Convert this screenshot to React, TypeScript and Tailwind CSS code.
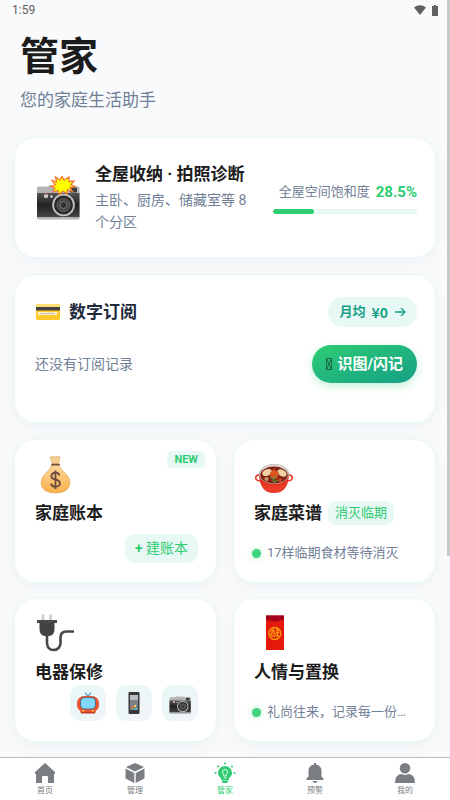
import type { ReactNode } from "react";

const CARD = "rounded-[21px] border border-[#e8f8f5] bg-white shadow-[0_4px_16px_rgba(30,41,59,0.04)]";

function Camera({ flash = false, className }: { flash?: boolean; className: string }) {
  return (
    <svg viewBox="0 0 44 44" className={className} aria-hidden="true">
      <defs>
        <linearGradient id="camBody" x1="0" y1="0" x2="0" y2="1">
          <stop offset="0" stopColor="#555" />
          <stop offset="0.5" stopColor="#222" />
          <stop offset="1" stopColor="#454545" />
        </linearGradient>
      </defs>
      <path d="M1 12q0-1.500 1.500-1.500H12l2-1.500h14l2 1.500h12q1.500 0 1.500 1.500v29q0 2-2 2h-38q-2.500 0-2.500-2z" fill="#b3b3b3" />
      <path d="M1 17h42.500v24H1z" fill="url(#camBody)" />
      <path d="M1 41h42.500v1q0 1.500-2 1.500H3q-2 0-2-1.500z" fill="#b5b5b5" />
      <rect x="34" y="11.500" width="7" height="5" rx="1" fill="#3b3b3b" />
      <circle cx="10" cy="20" r="2.200" fill="#c9c9c9" />
      <circle cx="10" cy="18" r="1" fill="#d55346" />
      <circle cx="15.500" cy="20.500" r="1.200" fill="#ddd" />
      <circle cx="27.500" cy="29" r="11.300" fill="#c4c4c4" />
      <circle cx="27.500" cy="29" r="9.500" fill="#292929" />
      <circle cx="27.500" cy="29" r="6.500" fill="#474747" stroke="#777" strokeWidth="0.700" />
      <circle cx="27.500" cy="29" r="3.500" fill="#303030" stroke="#888" strokeWidth="0.800" />
      {flash && (
        <path
          d="m15.500 4 5 2-1-5 4.500 3 2-4 2 4 5-3v4.500l5-.5-3 3.500 4 2-5 1 2.500 4-5-2-.5 4.500-4-3-3.500 3.500-1.500-4-5 1.500 2-4-3.500-1.500 4-2z"
          fill="#ff0"
          stroke="#f47b37"
          strokeWidth="1.300"
        />
      )}
    </svg>
  );
}

function CreditCard() {
  return (
    <svg viewBox="0 0 26 18" className="h-[18px] w-[26px]" aria-hidden="true">
      <rect x="1" y="1" width="24" height="16" rx="1.500" fill="#fdc92f" />
      <path d="M1 2.500Q1 1 2.500 1h21Q25 1 25 2.500V4H1z" fill="#ffdf75" />
      <path d="M1 4h24v3.500H1z" fill="#424242" />
      <path d="M3 9h19v3H3z" fill="#fff2ce" />
      <path d="m5 11 2-1 1 1 2-1 1 1 3-1 2 1 2-1 2 1" stroke="#9b9686" strokeWidth="0.600" fill="none" />
    </svg>
  );
}

function MoneyBag() {
  return (
    <svg viewBox="0 0 40 40" className="size-10" aria-hidden="true">
      <defs>
        <linearGradient id="bag" x1="0" y1="0" x2="0" y2="1">
          <stop offset="0" stopColor="#ffd79a" />
          <stop offset="1" stopColor="#f9b24e" />
        </linearGradient>
      </defs>
      <path d="M15 2q2-1 4 0 3-1 6 0l-1.500 7h-6z" fill="#f7cd8d" stroke="#d9ae74" strokeWidth="0.700" />
      <path d="M17 10h7q2 5 7 9 4 4 4 9-1 10-14.500 10T6 28q0-5 4-9 5-4 7-9z" fill="url(#bag)" stroke="#e0a04b" strokeWidth="0.600" />
      <path d="M17 9.700h7" stroke="#76513f" strokeWidth="1.800" strokeLinecap="round" />
      <path d="M24.500 20.500q-1-3-4-3t-4 3 4 4q4.500 1 4.500 4.200-.5 3-4.500 3t-4.500-3.200M20.500 15.500v18.500" fill="none" stroke="#6d4c41" strokeWidth="1.800" />
    </svg>
  );
}

function HotPot() {
  return (
    <svg viewBox="0 0 40 40" className="size-10" aria-hidden="true">
      <path d="M6 20H4q-3 1-2 4 1 2 5 2M34 20h2q3 1 2 4-1 2-5 2" fill="none" stroke="#e5341f" strokeWidth="1.600" />
      <path d="M5 20q1 18 15 18t15-18z" fill="#e63420" />
      <path d="M8 29q12 5 24 0-2 8-12 8T8 29" fill="#f0452e" opacity=".6" />
      <ellipse cx="20" cy="19" rx="15" ry="10" fill="#b0aaa7" />
      <ellipse cx="20" cy="18" rx="13.800" ry="8.500" fill="#dfdad6" />
      <ellipse cx="20" cy="20" rx="13.700" ry="8.500" fill="#822315" />
      <ellipse cx="13" cy="17.500" rx="5" ry="3.200" fill="#efd2a0" transform="rotate(-24 13 17.500)" />
      <ellipse cx="28" cy="18" rx="5" ry="3.200" fill="#efd2a0" transform="rotate(28 28 18)" />
      <path d="m16 18 4-4 5 4-2 6-6-1z" fill="#df5423" />
      <circle cx="12.500" cy="24" r="2" fill="#cf9d66" />
      <circle cx="26" cy="25" r="1.800" fill="#d84923" />
      <path d="m16 22 4 2 2-3m-3 3 1 3 4-2" fill="none" stroke="#5f8c3c" strokeWidth="1.300" />
    </svg>
  );
}

function Plug() {
  return (
    <svg viewBox="0 0 40 40" className="size-10" aria-hidden="true">
      <path d="M8 7V0.500M15.500 7V0.500" stroke="#ccc" strokeWidth="2.600" />
      <path d="M2 6h20v3H2z" fill="#484848" />
      <path d="M4.500 9h15v6q0 6-5 7h-5q-5-1-5-7z" fill="#424242" />
      <path d="M12 21v8q.5 7 6.500 7t7-6.500V23.500q0-6 6-6H39" fill="none" stroke="#484848" strokeWidth="2.600" />
    </svg>
  );
}

function RedEnvelope() {
  return (
    <svg viewBox="0 0 40 40" className="size-10" aria-hidden="true">
      <path d="M12 1.500h18V36H12z" fill="#e5180c" />
      <path d="M12 1.500h18V6q-5 0-6.500 1.500h-5Q17 6 12 6z" fill="#a4001c" />
      <circle cx="20.800" cy="19.500" r="6" fill="#e22a0b" stroke="#f99b09" strokeWidth="1.300" />
      <path d="M17 17h4m-2-2v3m-2 1h4v3h-4zm5-3h3m-3 2.500h3m-1.500-4v8M22 22h3" fill="none" stroke="#ffac13" strokeWidth="1" />
    </svg>
  );
}

function Television() {
  return (
    <svg viewBox="0 0 24 24" className="size-6" aria-hidden="true">
      <path d="m9 1.500 3 4 3-4" fill="none" stroke="#64a9bb" strokeWidth="1.400" />
      <path d="M4 19h16l-1 3.500H5z" fill="#c63b21" />
      <rect x="1" y="5" width="22" height="16" rx="7" fill="#ed5430" />
      <rect x="4" y="6" width="16" height="12.500" rx="4.500" fill="#576d78" />
      <rect x="5" y="7" width="14" height="10.500" rx="4" fill="#82d5fb" />
      <path d="M6 19.800h2m8 0h2" stroke="#ffc64b" strokeWidth="1.500" />
    </svg>
  );
}

function Phone() {
  return (
    <svg viewBox="0 0 24 24" className="size-6" aria-hidden="true">
      <rect x="6.500" y="1" width="11" height="22" rx="1" fill="#393939" />
      <path d="M8 4h8v15H8z" fill="#7b8285" />
      <path d="M8 4h8v5H8z" fill="#bcbfc0" />
      <path d="M9 15h2v2H9z" fill="#e8594a" />
      <path d="M12 14h2v2h-2z" fill="#fbc645" />
      <path d="M13 17h2v2h-2z" fill="#56b9e5" />
      <path d="M10 17h2v2h-2z" fill="#69b45b" />
    </svg>
  );
}

function TileCard({ title, icon, badge, children }: { title: string; icon: ReactNode; badge?: ReactNode; children: ReactNode }) {
  return (
    <section className={`${CARD} relative flex h-36 min-w-0 flex-col pt-[15px] pr-[18px] pl-5`}>
      {icon}
      <div className="mt-[5px] flex items-center gap-[6px]">
        <h2 className="text-[17px] leading-[26px] font-bold whitespace-nowrap">{title}</h2>
        {badge}
      </div>
      {children}
    </section>
  );
}

function StatusLine({ text }: { text: string }) {
  return (
    <p className="mt-[17px] -ml-[2px] flex items-center gap-[6px] text-[13px] leading-5 text-[#718096]">
      <span className="size-[9px] shrink-0 rounded-full bg-[#40d47e] shadow-[0_0_6px_rgba(46,204,113,0.4)]" />
      <span className="whitespace-nowrap">{text}</span>
    </p>
  );
}

const NAV_ITEMS: { label: string; icon: ReactNode }[] = [
  { label: "首页", icon: <path d="M10 0 0 9v2h1v9h6v-6q0-1 1-1h4q1 0 1 1v6h6v-9h1V9z" /> },
  { label: "管理", icon: <path d="m10 0 9 4-9 4.500L1 4zM.5 5.500 9.300 10v10L.5 15.500zm19 0L10.700 10v10l8.800-4.500z" /> },
  {
    label: "管家",
    icon: (
      <>
        <path d="M10 3a7 7 0 0 0-7 7c0 2.500 1.500 4 3.200 5.300V17h7.600v-1.700C15.500 14 17 12.500 17 10a7 7 0 0 0-7-7zM6.500 17.500h7q0 2-2 2.500h-3q-2-.5-2-2.500z" />
        <path d="M8.700 13v-1.500Q7.500 10.500 7.500 9a2.500 2.500 0 0 1 5 0q0 1.500-1.200 2.500V13zm0 2h2.600" fill="none" stroke="white" strokeWidth="0.900" />
        <circle cx="10" cy="0.500" r="1" />
        <circle cx="3" cy="3.500" r="1" />
        <circle cx="17" cy="3.500" r="1" />
        <circle cx="0.500" cy="10" r="1" />
        <circle cx="19.500" cy="10" r="1" />
      </>
    ),
  },
  { label: "预警", icon: <path d="M9 0h2v1.500q5.500 1 5.500 6.500v5.500l2 2V17h-17v-1.500l2-2V8q0-5.500 5.500-6.500zM7.500 18h5q-.5 2-2.500 2t-2.500-2z" /> },
  { label: "我的", icon: <path d="M10 0a5.300 5.300 0 1 0 0 10.600A5.300 5.300 0 0 0 10 0zM0 20q0-9 7-9 3 2 6 0 7 0 7 9z" /> },
];

export default function App() {
  return (
    <div className="relative flex h-screen flex-col overflow-hidden bg-[#f8fafc] font-[Roboto,'Noto_Sans_CJK_SC',sans-serif] text-[#1c1c1c]">
      <div className="flex h-5 shrink-0 items-center justify-between px-3 text-[12px] text-[#606060]">
        <span>1:59</span>
        <div className="flex items-center gap-[6px]">
          <svg viewBox="0 0 12 10" className="h-[10px] w-3" fill="#606060" aria-hidden="true">
            <path d="M0 2.500Q6-2 12 2.500L6 10z" />
          </svg>
          <svg viewBox="0 0 6 11" className="h-[11px] w-[6px]" fill="#606060" aria-hidden="true">
            <path d="M2 0h2v1h2v10H0V1h2z" />
          </svg>
        </div>
      </div>

      <main className="min-h-0 flex-1 overflow-hidden px-[14px]">
        <header className="px-[6px] pt-3">
          <h1 className="text-[39px] leading-[50px] font-bold">管家</h1>
          <p className="mt-[6px] text-[17px] leading-6 text-[#718096]">您的家庭生活助手</p>
        </header>

        <div className="mt-[25px] flex flex-col gap-4">
          <section className={`${CARD} flex min-h-[121px] items-center pr-[18px] pl-5`}>
            <Camera flash className="mx-px size-11 shrink-0" />
            <div className="ml-[14px] min-w-0 flex-1">
              <h2 className="text-[17px] leading-6 font-bold whitespace-nowrap">全屋收纳 · 拍照诊断</h2>
              <p className="mt-[3px] text-[14px] leading-[22px] text-[#718096]">主卧、厨房、储藏室等 8 个分区</p>
            </div>
            <div className="ml-4 w-36 shrink-0">
              <div className="flex items-center justify-end gap-[6px]">
                <span className="text-[13px] leading-5 text-[#718096]">全屋空间饱和度</span>
                <span className="text-[15px] leading-5 font-bold text-[#2ecc71]">28.5%</span>
              </div>
              <div className="mt-[7px] h-[5px] overflow-hidden rounded-full bg-[#e8f8f5]">
                <div className="h-full rounded-full bg-[#2ecc71]" style={{ width: "28.5%" }} />
              </div>
            </div>
          </section>

          <section className={`${CARD} min-h-[149px] pt-[22px] pr-[18px] pl-5`}>
            <div className="flex items-center justify-between">
              <div className="flex items-center gap-2">
                <CreditCard />
                <h2 className="text-[17px] leading-6 font-bold text-[#1e293b]">数字订阅</h2>
              </div>
              <button className="flex h-[30px] items-center gap-[6px] rounded-full bg-[#e8f8f5] px-[11px] text-[13px] font-bold text-[#16a085]">
                月均
                <span className="font-['Noto_Sans_CJK_SC',sans-serif] text-[14px]">¥0</span>
                <svg viewBox="0 0 12 12" className="size-3" fill="none" stroke="currentColor" strokeWidth="1.300" aria-hidden="true">
                  <path d="M1 6h10M7 2l4 4-4 4" />
                </svg>
              </button>
            </div>
            <div className="mt-[18px] flex items-center justify-between">
              <p className="text-[14px] text-[#718096]">还没有订阅记录</p>
              <button className="flex h-[38px] items-center gap-[5px] rounded-full bg-linear-to-br from-[#2ecc71] to-[#16a085] px-[14px] text-[15px] font-bold text-white shadow-[0_3px_8px_rgba(46,204,113,0.3)]">
                <svg viewBox="0 0 6 12" className="h-3 w-[6px]" fill="none" stroke="#164c32" strokeWidth="0.700" aria-hidden="true">
                  <path d="M.5.500h5v11h-5zM.5.500l5 11m0-11-5 11" />
                </svg>
                识图/闪记
              </button>
            </div>
          </section>

          <div className="grid grid-cols-2 gap-x-4 gap-y-[15px]">
            <TileCard title="家庭账本" icon={<MoneyBag />}>
              <span className="absolute top-[11px] right-[11px] rounded-[5px] bg-[#e8f8f5] px-[7px] text-[11px] leading-[17px] font-bold text-[#2ecc71]">NEW</span>
              <button className="mt-2 h-[29px] self-end rounded-[10px] bg-[#e8f8f5] px-[10px] text-[14px] text-[#2ecc71]">
                <b>+</b> 建账本
              </button>
            </TileCard>
            <TileCard
              title="家庭菜谱"
              icon={<HotPot />}
              badge={<span className="rounded-lg bg-[#e8f8f5] px-[7px] text-[13px] leading-6 whitespace-nowrap text-[#2ecc71]">消灭临期</span>}
            >
              <StatusLine text="17样临期食材等待消灭" />
            </TileCard>
            <TileCard title="电器保修" icon={<Plug />}>
              <div className="flex justify-end gap-[10px]">
                <span className="flex size-9 items-center justify-center rounded-[10px] bg-linear-to-br from-[#e8f8f5] to-[#f1f5f9]"><Television /></span>
                <span className="flex size-9 items-center justify-center rounded-[10px] bg-linear-to-br from-[#e8f8f5] to-[#f1f5f9]"><Phone /></span>
                <span className="flex size-9 items-center justify-center rounded-[10px] bg-linear-to-br from-[#e8f8f5] to-[#f1f5f9]"><Camera className="size-[22px]" /></span>
              </div>
            </TileCard>
            <TileCard title="人情与置换" icon={<RedEnvelope />}>
              <StatusLine text="礼尚往来，记录每一份…" />
            </TileCard>
            <div className={`${CARD} h-36`} />
            <div className={`${CARD} h-36`} />
          </div>
        </div>
      </main>

      <nav className="flex h-[43px] shrink-0 border-t border-[#bdbdbd] bg-white">
        {NAV_ITEMS.map((item) => (
          <a
            key={item.label}
            href="#"
            className={`flex flex-1 flex-col items-center pt-[5px] text-[8px] leading-[15px] ${item.label === "管家" ? "text-[#2ecc71]" : "text-[#7a7e83]"}`}
          >
            <svg viewBox="0 0 20 20" className="size-5 overflow-visible" fill="currentColor" aria-hidden="true">
              {item.icon}
            </svg>
            {item.label}
          </a>
        ))}
      </nav>

      <div className="absolute top-0 right-0 h-[556px] w-[3px] bg-[#c8c8c8]" />
    </div>
  );
}
